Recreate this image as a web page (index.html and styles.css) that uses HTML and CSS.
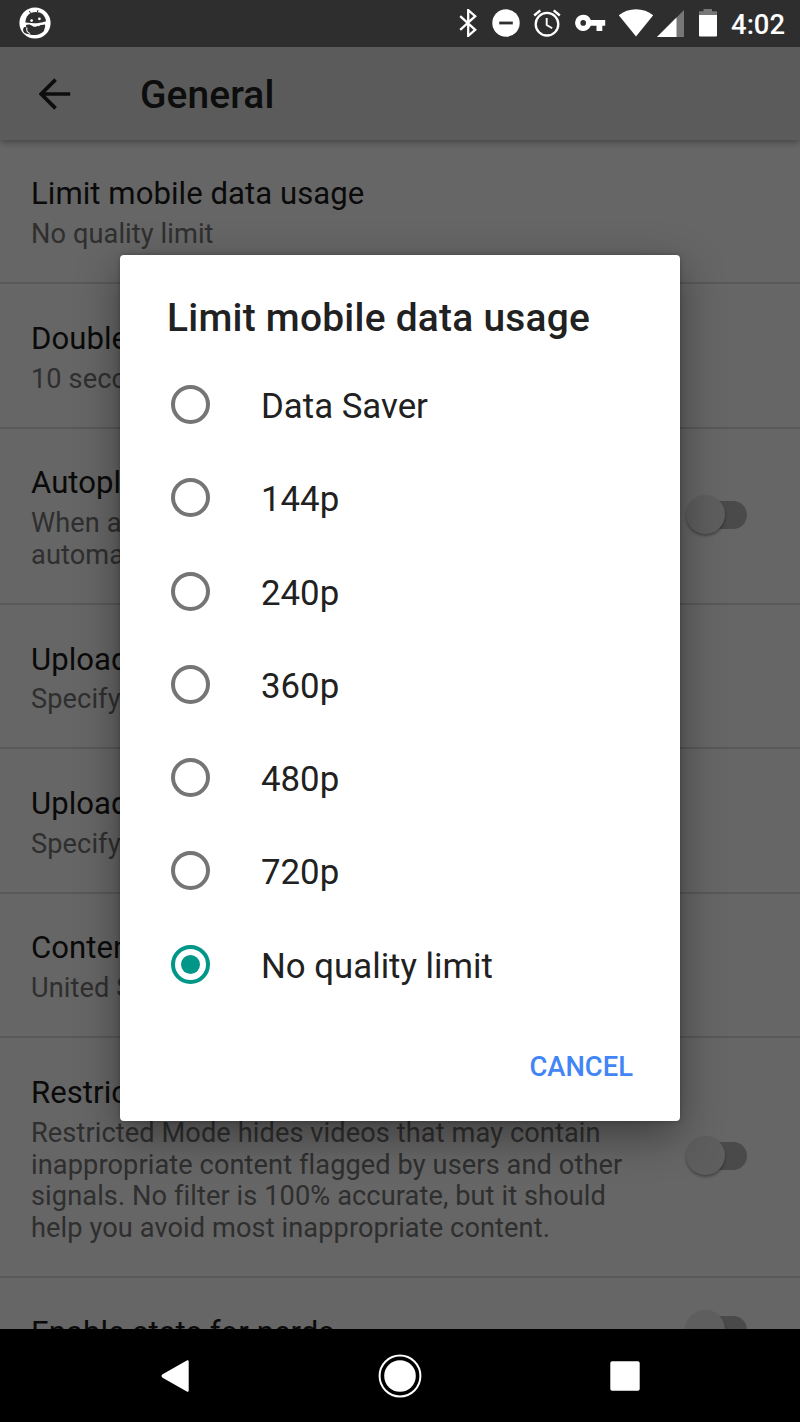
FILE: index.html
```html
<!DOCTYPE html>
<html lang="en">
<head>
    <meta charset="UTF-8">
    <meta name="viewport" content="width=device-width, initial-scale=1.0">
    <title>General</title>
    <link rel="stylesheet" href="styles.css">
</head>
<body>

    <div class="status-bar">
        <svg class="robot" width="32" height="32" viewBox="0 0 32 32">
            <circle cx="16" cy="16" r="15.6" fill="#fff"/>
            <path d="M6.400 15.600C6.400 9 11 5 16.600 5c5.500 0 9.600 3.200 10.400 9.200-4.500 1.600-8 2-12 2z" fill="#2e2e2e"/>
            <path d="M10.300 4l1.600 2.600M19 3l-.8 2.600" stroke="#2e2e2e" stroke-width="1"/>
            <circle cx="12.600" cy="13.600" r="1.400" fill="#fff"/>
            <circle cx="20.400" cy="11.800" r="1.400" fill="#fff"/>
            <path d="M7 18c2.500-1 4.500-.6 6.500 1 2 1.400 4 1 5.500-.4l7-1.200c.7 3-.9 4.200-1 6.400-2.400 3.600-9.500 5.600-14.500 3.400C6 27.200 3.500 25 4.200 21.800c.4-1.800 1.700-2.200 3-1.400" fill="#2e2e2e"/>
            <path d="M8 20.500c-1 3 .5 5 3 6" fill="none" stroke="#fff" stroke-width="1.100"/>
            <path d="M15 17.600l5 1.200 1.500-1.600" fill="none" stroke="#fff" stroke-width="1"/>
        </svg>
        <div class="status-icons">
            <svg width="28" height="28" viewBox="0 0 28 28" class="bluetooth">
                <path d="M6.200 7.200l15 13.600-7 6.100V1.100l7 6.100-15 13.600" fill="none" stroke="#fff" stroke-width="2.300"/>
            </svg>
            <svg width="28" height="28" viewBox="0 0 28 28" class="dnd">
                <circle cx="14" cy="14" r="13.700" fill="#fff"/>
                <path d="M7.200 14h13.600" stroke="#2e2e2e" stroke-width="2.800"/>
            </svg>
            <svg width="28" height="28" viewBox="0 0 28 28" class="alarm">
                <circle cx="14" cy="15.200" r="11.300" fill="none" stroke="#fff" stroke-width="2.300"/>
                <path d="M1.200 6.500L7.300 1.400M26.800 6.500l-6.100-5.100" stroke="#fff" stroke-width="2.500"/>
                <path d="M13.700 9v7l5.500 3.200" fill="none" stroke="#fff" stroke-width="1.900"/>
            </svg>
            <svg width="31" height="18" viewBox="0 0 31 18" class="key">
                <path fill-rule="evenodd" d="M8.200.8a8.100 8.100 0 1 0 7.600 10.900h5.700v5.200h5.800v-5.200h2.900V6.100H15.800A8.100 8.100 0 0 0 8.200.8zm0 5.300a2.800 2.800 0 1 1 0 5.600 2.800 2.800 0 0 1 0-5.600z" fill="#fff"/>
            </svg>
            <svg width="36" height="28" viewBox="0 0 36 28" class="wifi">
                <path d="M18 27.600L.8 6.300C10-1.700 26-1.700 35.200 6.300z" fill="#fff"/>
            </svg>
            <svg width="27" height="27" viewBox="0 0 27 27" class="cell">
                <path d="M27 0v27H0z" fill="#777"/>
                <path d="M19.500 7.500V27H0z" fill="#fff"/>
            </svg>
            <svg width="18" height="28" viewBox="0 0 18 28" class="battery">
                <path d="M0 2.300h4.500V0h8.500v2.300h5V7H0z" fill="#777"/>
                <path d="M0 6h18v20.500a1 1 0 0 1-1 1H1a1 1 0 0 1-1-1z" fill="#fff"/>
            </svg>
            <span class="clock">4:02</span>
        </div>
    </div>

    <div class="screen">
        <header class="toolbar">
            <svg width="32" height="32" viewBox="0 0 32 32">
                <path d="M31.200 16H3M16.600 1.600L2.200 16l14.400 14.400" fill="none" stroke="#212121" stroke-width="3.700"/>
            </svg>
            <h1>General</h1>
        </header>

        <div class="settings">
            <div class="row">
                <div class="text">
                    <h3>Limit mobile data usage</h3>
                    <p>No quality limit</p>
                </div>
            </div>
            <div class="row">
                <div class="text">
                    <h3>Double tap</h3>
                    <p>10 seconds</p>
                </div>
            </div>
            <div class="row">
                <div class="text">
                    <h3>Autoplay</h3>
                    <p>When a video<br>automatically</p>
                </div>
                <div class="switch"></div>
            </div>
            <div class="row">
                <div class="text">
                    <h3>Uploads</h3>
                    <p>Specify</p>
                </div>
            </div>
            <div class="row">
                <div class="text">
                    <h3>Uploads</h3>
                    <p>Specify</p>
                </div>
            </div>
            <div class="row">
                <div class="text">
                    <h3>Content</h3>
                    <p>United States</p>
                </div>
            </div>
            <div class="row">
                <div class="text">
                    <h3>Restricted Mode</h3>
                    <p>Restricted Mode hides videos that may contain<br>inappropriate content flagged by users and other<br>signals. No filter is 100% accurate, but it should<br>help you avoid most inappropriate content.</p>
                </div>
                <div class="switch"></div>
            </div>
            <div class="row last">
                <div class="text">
                    <h3>Enable stats for nerds</h3>
                </div>
                <div class="switch"></div>
            </div>
        </div>

        <!-- Dialog -->
        <div class="scrim">
            <div class="dialog">
                <h2>Limit mobile data usage</h2>
                <div class="option"><span class="radio"></span><span class="label">Data Saver</span></div>
                <div class="option"><span class="radio"></span><span class="label">144p</span></div>
                <div class="option"><span class="radio"></span><span class="label">240p</span></div>
                <div class="option"><span class="radio"></span><span class="label">360p</span></div>
                <div class="option"><span class="radio"></span><span class="label">480p</span></div>
                <div class="option"><span class="radio"></span><span class="label">720p</span></div>
                <div class="option"><span class="radio checked"></span><span class="label">No quality limit</span></div>
                <div class="actions">
                    <button>CANCEL</button>
                </div>
            </div>
        </div>
    </div>

    <div class="nav-bar">
        <svg width="28" height="32" viewBox="0 0 28 32">
            <path d="M1.600 14.300L25.800.6q1.900-.9 1.900 1v28.800q0 1.900-1.900 1L1.600 17.700q-2.200-1.700 0-3.400z" fill="#fff"/>
        </svg>
        <svg width="44" height="44" viewBox="0 0 44 44">
            <circle cx="22" cy="22" r="20.400" fill="none" stroke="#fff" stroke-width="2"/>
            <circle cx="22" cy="22" r="15.800" fill="#fff"/>
        </svg>
        <svg width="30" height="30" viewBox="0 0 30 30">
            <rect x=".3" y=".3" width="29.400" height="29.400" rx="1.800" fill="#fff"/>
        </svg>
    </div>

</body>
</html>
```

FILE: styles.css
```css
* {
    box-sizing: border-box;
}

body {
    margin: 0;
    width: 800px;
    height: 1422px;
    display: flex;
    flex-direction: column;
    overflow: hidden;
    font-family: Roboto, sans-serif;
    background: #000;
}

h1, h2, h3, p {
    margin: 0;
    font-weight: 400;
}

svg {
    display: block;
    flex: none;
}

/* Status bar */
.status-bar {
    height: 46.7px;
    flex: none;
    display: flex;
    justify-content: space-between;
    align-items: center;
    padding: 0 15px 0 19px;
    background: #2e2e2e;
    color: #fff;
}

.status-icons {
    display: flex;
    align-items: center;
}

.dnd {
    margin-left: 10px;
}

.alarm {
    margin-left: 13px;
}

.key {
    margin-left: 14px;
}

.wifi {
    margin-left: 12px;
}

.cell {
    margin-left: 3px;
}

.battery {
    margin-left: 15px;
}

.clock {
    margin-left: 14px;
    padding-top: 3px;
    font-size: 27.4px;
    font-weight: 500;
}

/* Settings page */
.screen {
    position: relative;
    height: 1282px;
    flex: none;
    overflow: hidden;
    background: #fff;
}

.toolbar {
    position: relative;
    height: 93.3px;
    display: flex;
    align-items: center;
    gap: 69px;
    padding: 1px 0 0 39px;
    background: #e4e4e4;
    box-shadow: 0 2px 7px rgba(0, 0, 0, 0.35);
}

.toolbar h1 {
    padding-top: 1px;
    font-size: 38.9px;
    font-weight: 500;
    letter-spacing: 0.1px;
    color: #212121;
}

.row {
    display: flex;
    align-items: center;
    justify-content: space-between;
    padding: 36.5px 53px 31.1px 31px;
    border-bottom: 2px solid #dedede;
}

.row h3 {
    font-size: 31.1px;
    line-height: 36.5px;
    letter-spacing: 0.05px;
    color: #1a1a1a;
}

.row p {
    margin-top: 6.4px;
    font-size: 27.2px;
    line-height: 31.9px;
    letter-spacing: 0.09px;
    white-space: nowrap;
    color: #757575;
}

.row.last {
    border-bottom: none;
}

.switch {
    position: relative;
    width: 55px;
    height: 28px;
    margin-bottom: 7px;
    border-radius: 14px;
    background: #b9b9b9;
}

.switch::before {
    content: "";
    position: absolute;
    left: -6px;
    top: -6px;
    width: 39px;
    height: 39px;
    border-radius: 50%;
    background: #ececec;
    box-shadow: 0 2px 3px rgba(0, 0, 0, 0.35);
}

/* Dialog */
.scrim {
    position: absolute;
    inset: 0;
    display: flex;
    align-items: center;
    justify-content: center;
    background: rgba(0, 0, 0, 0.6);
}

.dialog {
    width: 560px;
    height: 866px;
    padding-top: 36px;
    border-radius: 4px;
    background: #fff;
    color: #212121;
    box-shadow: 0 14px 44px rgba(0, 0, 0, 0.4), 0 0 5px rgba(0, 0, 0, 0.25);
}

.dialog h2 {
    padding-left: 47px;
    margin-bottom: 13px;
    font-size: 38.9px;
    line-height: 54px;
    font-weight: 500;
    letter-spacing: 0.25px;
}

.option {
    height: 93.33px;
    display: flex;
    align-items: center;
    padding-left: 51px;
    font-size: 34.8px;
}

.label {
    padding-top: 3px;
}

.radio {
    width: 39px;
    height: 39px;
    margin-right: 51px;
    border: 4px solid #757575;
    border-radius: 50%;
}

.radio.checked {
    border-color: #009688;
    padding: 6px;
}

.radio.checked::before {
    content: "";
    display: block;
    height: 100%;
    border-radius: 50%;
    background: #009688;
}

.actions {
    display: flex;
    justify-content: flex-end;
    padding: 38px 47px 0 0;
}

.actions button {
    padding: 0;
    border: none;
    background: none;
    font-family: inherit;
    font-size: 27.4px;
    font-weight: 500;
    line-height: 36px;
    color: #4285f4;
}

/* Navigation bar */
.nav-bar {
    flex: 1;
    display: flex;
    align-items: center;
    justify-content: space-between;
    padding: 1px 160px 0 161px;
    background: #000;
}
```
